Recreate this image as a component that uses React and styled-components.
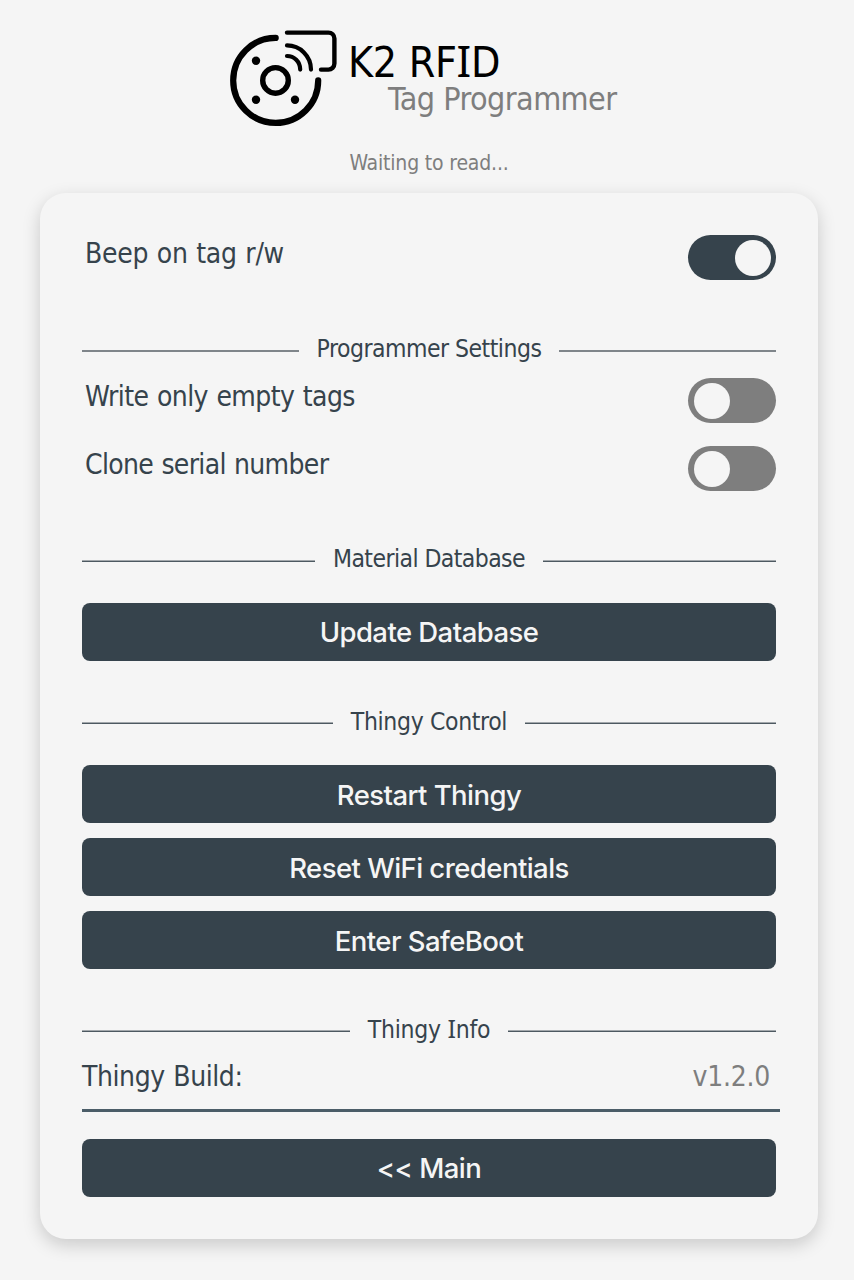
import React, { useState } from "react";
import styled, { createGlobalStyle } from "styled-components";

const INK = "#36434c";
const PAPER = "#f5f5f5";
const MUTED = "#7e7e7e";

const GlobalStyle = createGlobalStyle`
  *, *::before, *::after { box-sizing: border-box; }
  body {
    margin: 0;
    background: ${PAPER};
    color: ${INK};
    font-family: "DejaVu Sans Condensed", "DejaVu Sans", sans-serif;
    font-stretch: condensed;
  }
`;

const Page = styled.main`
  height: 1280px;
  padding: 28px 36px 0 40px;
  overflow: hidden;
`;

const Header = styled.header`
  display: flex;
  height: 120px;
  padding-left: 188px;
`;

const Logo = styled.svg`
  width: 112px;
  height: 100px;
  flex: none;
`;

const Brand = styled.div`
  padding: 17px 0 0 8px;
  white-space: nowrap;
`;

const Title = styled.h1`
  margin: 0;
  color: #000;
  font-size: 42.5px;
  font-weight: 400;
  line-height: 36px;
  letter-spacing: -0.3px;
`;

const Subtitle = styled.p`
  margin: 1px 0 0 40px;
  color: ${MUTED};
  font-size: 32px;
  line-height: 34px;
  letter-spacing: -0.55px;
`;

const SerifI = styled.span`
  font-family: "Noto Sans", sans-serif;
  font-size: 1.02em;
  line-height: 1px;
`;

const Status = styled.p`
  margin: 0;
  height: 45px;
  color: ${MUTED};
  font-size: 21px;
  line-height: 30px;
  letter-spacing: -0.17px;
  text-align: center;
`;

const Card = styled.section`
  height: 1046px;
  padding: 42px;
  border-radius: 26px;
  box-shadow: 0 6px 18px rgba(0, 0, 0, 0.18);
`;

const SwitchRow = styled.label`
  display: flex;
  justify-content: space-between;
  height: 45px;
  margin-bottom: ${(p) => p.$after}px;
  padding-left: 3px;
`;

const RowText = styled.span`
  font-size: 28px;
  line-height: 38px;
  letter-spacing: ${(p) => p.$tracking}px;
  word-spacing: 1px;
  white-space: nowrap;
`;

const Track = styled.button`
  width: 88px;
  height: 45px;
  padding: 0 5px 0 6px;
  display: flex;
  align-items: center;
  justify-content: ${(p) => (p.$on ? "flex-end" : "flex-start")};
  border: 0;
  border-radius: 23px;
  background: ${(p) => (p.$on ? INK : MUTED)};
`;

const Knob = styled.span`
  width: 36px;
  height: 36px;
  border-radius: 50%;
  background: ${PAPER};
`;

const Heading = styled.h2`
  display: flex;
  align-items: center;
  gap: 18px;
  height: 30px;
  margin: 0 0 ${(p) => p.$after}px;
  font-size: 24.5px;
  font-weight: 400;
  line-height: 26px;
  letter-spacing: ${(p) => p.$tracking}px;
  white-space: nowrap;

  &::before, &::after {
    content: "";
    flex: 1;
    height: 2px;
    margin-top: 4px;
    background: ${(p) => (p.$soft ? "#7f858a" : "linear-gradient(#a3a8ac 50%, #4d5961 50%)")};
  }
`;

const HeadingText = styled.span`
  padding-top: ${(p) => (p.$raised ? 0 : 1)}px;
`;

const ActionButton = styled.button`
  display: block;
  width: 100%;
  height: 58.5px;
  margin: 0 0 ${(p) => p.$after || 0}px;
  padding: ${(p) => (p.$raised ? 0 : 1)}px 0 0;
  border: 0;
  border-radius: 8px;
  background: ${INK};
  color: ${PAPER};
  font: 500 27.5px/58px Inter, sans-serif;
  letter-spacing: -0.55px;
`;

const InfoRow = styled.div`
  display: flex;
  justify-content: space-between;
  width: 698px;
  height: 54px;
  margin-bottom: 26.5px;
  padding-right: 10px;
  border-bottom: 3px solid #4b5d68;
`;

const Version = styled(RowText)`
  color: ${MUTED};
`;

function Switch({ label, initial = false, after, tracking }) {
  const [on, setOn] = useState(initial);
  return (
    <SwitchRow $after={after}>
      <RowText $tracking={tracking}>{label}</RowText>
      <Track type="button" role="switch" aria-label={label} aria-checked={on} $on={on} onClick={() => setOn(!on)}>
        <Knob />
      </Track>
    </SwitchRow>
  );
}

function SpoolLogo() {
  return (
    <Logo viewBox="228 28 112 100" fill="none" stroke="#000" strokeLinecap="round" strokeLinejoin="round" aria-hidden="true">
      <path d="M275.7 37.9A42.5 42.5 0 1 0 318.2 80.4" strokeWidth="6.2" />
      <circle cx="275.5" cy="80.4" r="12.8" strokeWidth="5.4" />
      <path d="M287 32.6H328.4a6 6 0 0 1 6 6V63.6a6 6 0 0 1 -6 6H321" strokeWidth="4.4" />
      <path d="M287 45.4C300 45.4 311 56 311 69.6M287 56C294 56 300.2 61.5 300.2 69.6" strokeWidth="4.2" />
      <g fill="#000" stroke="none">
        <circle cx="256" cy="60.7" r="4.2" />
        <circle cx="256" cy="99.8" r="4.2" />
        <circle cx="295" cy="99.8" r="4.2" />
      </g>
    </Logo>
  );
}

export default function App() {
  return (
    <Page>
      <GlobalStyle />
      <Header>
        <SpoolLogo />
        <Brand>
          <Title>K2 RF<SerifI>I</SerifI>D</Title>
          <Subtitle>Tag Programmer</Subtitle>
        </Brand>
      </Header>
      <Status>Waiting to read...</Status>
      <Card>
        <Switch label="Beep on tag r/w" initial after={54} tracking={-0.3} />
        <Heading $after={14} $tracking={-0.5} $soft><HeadingText $raised>Programmer Settings</HeadingText></Heading>
        <Switch label="Write only empty tags" after={23} tracking={-0.57} />
        <Switch label="Clone serial number" after={53} tracking={-0.68} />
        <Heading $after={28.5} $tracking={-0.57}><HeadingText $raised>Material Database</HeadingText></Heading>
        <ActionButton $after={45} $raised>Update Database</ActionButton>
        <Heading $after={28.5} $tracking={-0.35}><HeadingText>Thingy Control</HeadingText></Heading>
        <ActionButton $after={14.5}>Restart Thingy</ActionButton>
        <ActionButton $after={14.5}>Reset WiFi credentials</ActionButton>
        <ActionButton $after={45}>Enter SafeBoot</ActionButton>
        <Heading $after={14} $tracking={-0.25}><HeadingText>Thingy <SerifI>I</SerifI>nfo</HeadingText></Heading>
        <InfoRow>
          <RowText $tracking={-0.42}>Thingy Build:</RowText>
          <Version $tracking={-0.25}>v1.2.0</Version>
        </InfoRow>
        <ActionButton $raised>&lt;&lt; Main</ActionButton>
      </Card>
    </Page>
  );
}
